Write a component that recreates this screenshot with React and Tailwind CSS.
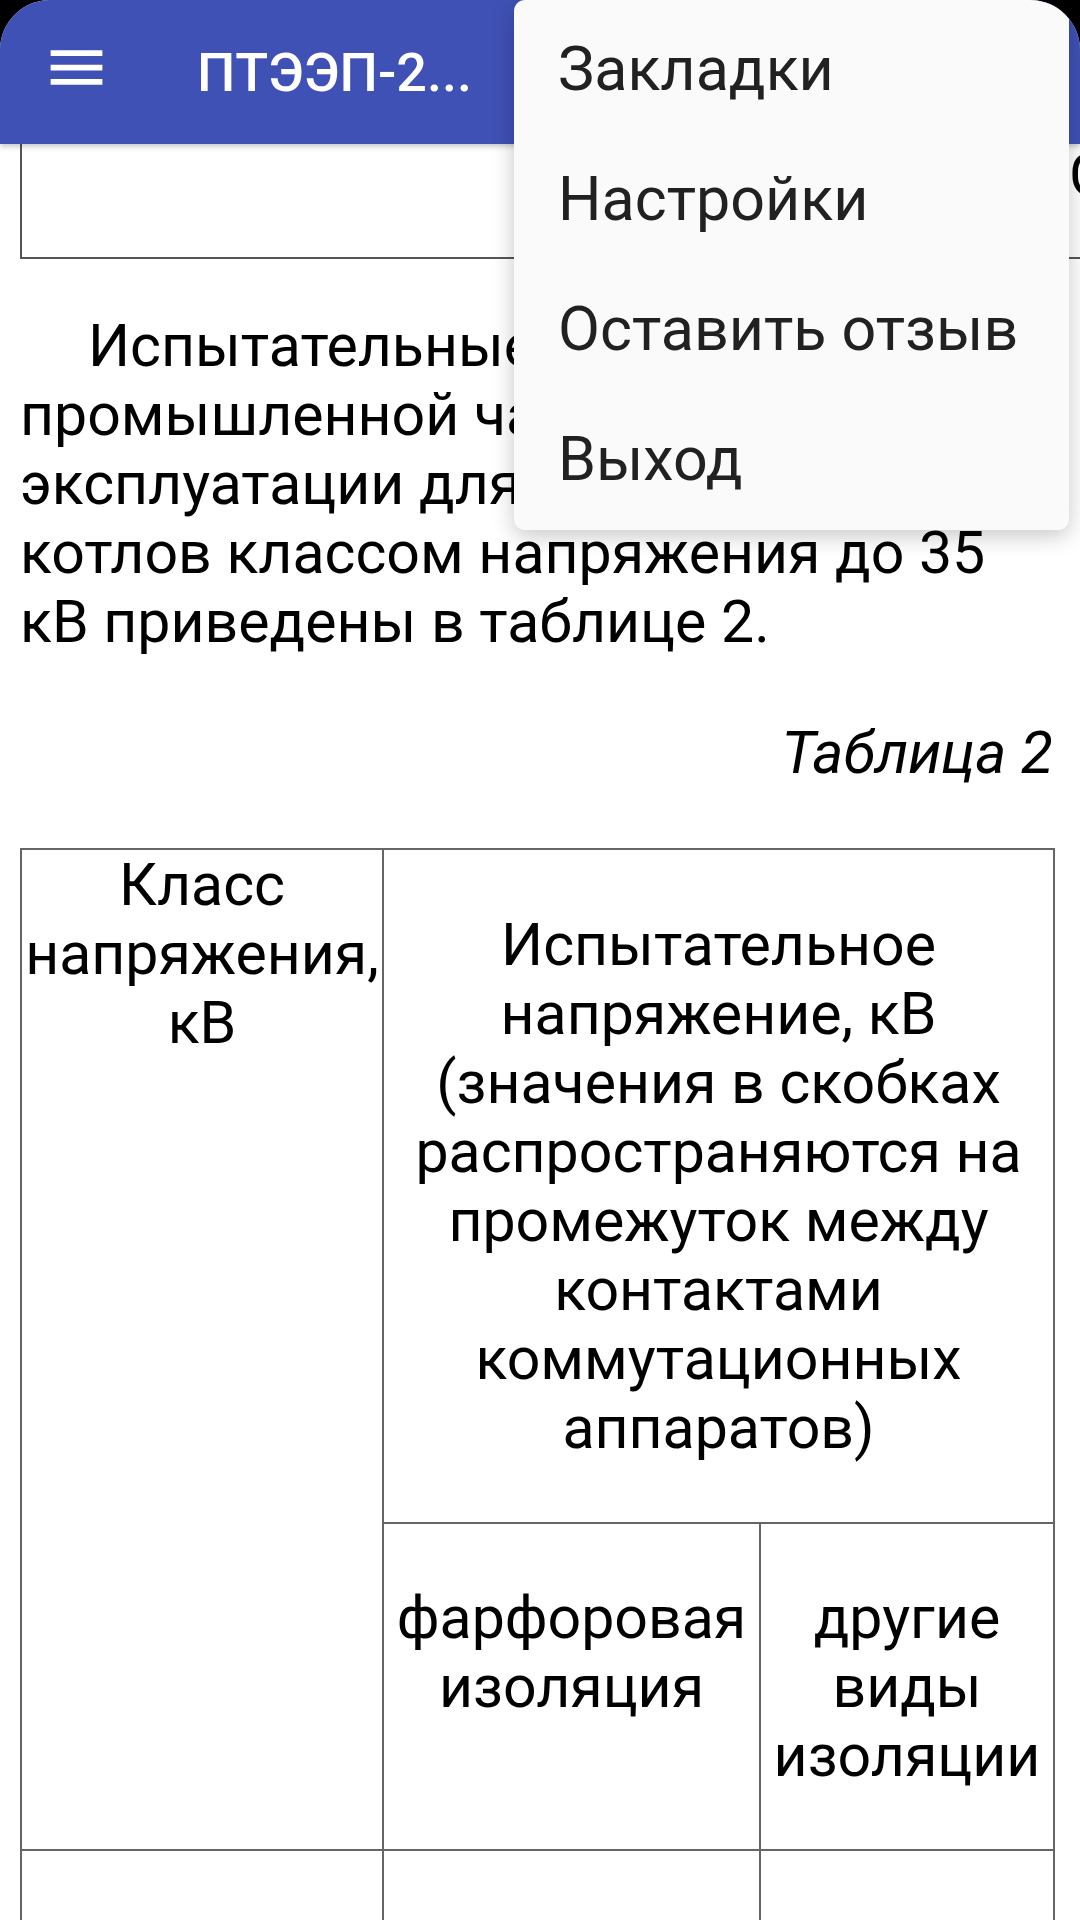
export default function App() {
  const menuItems = ['Закладки', 'Настройки', 'Оставить отзыв', 'Выход'];

  return (
    <div className="w-[1080px] h-[1920px] bg-black overflow-hidden font-['Roboto',sans-serif]">
      <div className="relative h-full bg-white rounded-t-[50px] overflow-hidden">
        {/* Toolbar */}
        <header className="relative z-10 h-[144px] bg-[#3f51b5] flex items-center shadow-[0_2px_6px_rgba(0,0,0,0.25)]">
          <svg className="ml-[42px] -mt-[10px] w-[69px] h-[69px] shrink-0" viewBox="0 0 24 24" fill="#ffffff">
            <path d="M3 18h18v-2H3v2zm0-5h18v-2H3v2zm0-7v2h18V6H3z" />
          </svg>
          <h1 className="ml-[86px] text-white text-[54px] font-medium whitespace-nowrap">ПТЭЭП-2...</h1>
        </header>

        {/* Document */}
        <main className="px-[20px] text-black text-[59px] leading-[69px]">
          <div className="h-[119px] w-[1100px] border-l-2 border-b-2 border-[#555555]">
            <span className="block -mt-[4px] ml-[1047px] whitespace-nowrap">Со</span>
          </div>

          <p className="mt-[52px] indent-[68px] whitespace-nowrap">
            Испытательные напряжения<br />
            промышленной частоты при<br />
            эксплуатации для электродных<br />
            котлов классом напряжения до 35<br />
            кВ приведены в таблице 2.
          </p>

          <p className="mt-[62px] pr-[7px] text-right italic">Таблица 2</p>

          <table className="mt-[61px] table-fixed border-collapse text-center">
            <colgroup>
              <col className="w-[362px]" />
              <col className="w-[377px]" />
              <col className="w-[294px]" />
            </colgroup>
            <tbody>
              <tr>
                <td rowSpan={2} className="border-2 border-[#666666] align-top p-0">
                  Класс<br />напряжения,<br />кВ
                </td>
                <td colSpan={2} className="border-2 border-[#666666] align-middle py-[60px] px-0">
                  Испытательное<br />
                  напряжение, кВ<br />
                  (значения в скобках<br />
                  распространяются на<br />
                  промежуток между<br />
                  контактами<br />
                  коммутационных<br />
                  аппаратов)
                </td>
              </tr>
              <tr>
                <td className="border-2 border-[#666666] align-top pt-[59px] pb-[59px] px-0">
                  фарфоровая<br />изоляция
                </td>
                <td className="border-2 border-[#666666] align-top pt-[59px] pb-[59px] px-0">
                  другие<br />виды<br />изоляции
                </td>
              </tr>
              <tr>
                <td className="border-2 border-[#666666] h-[200px]"></td>
                <td className="border-2 border-[#666666] h-[200px]"></td>
                <td className="border-2 border-[#666666] h-[200px]"></td>
              </tr>
            </tbody>
          </table>
        </main>

        {/* Overflow menu */}
        <div className="absolute z-20 left-[514px] top-0 w-[555px] h-[530px] py-[5px] bg-[#fafafa] rounded-[11px] shadow-[0_6px_22px_rgba(0,0,0,0.22)]">
          {menuItems.map((item) => (
            <div key={item} className="h-[130px] flex items-center pl-[44px] text-[61px] text-[#212121] whitespace-nowrap">
              {item}
            </div>
          ))}
        </div>
      </div>
    </div>
  );
}
